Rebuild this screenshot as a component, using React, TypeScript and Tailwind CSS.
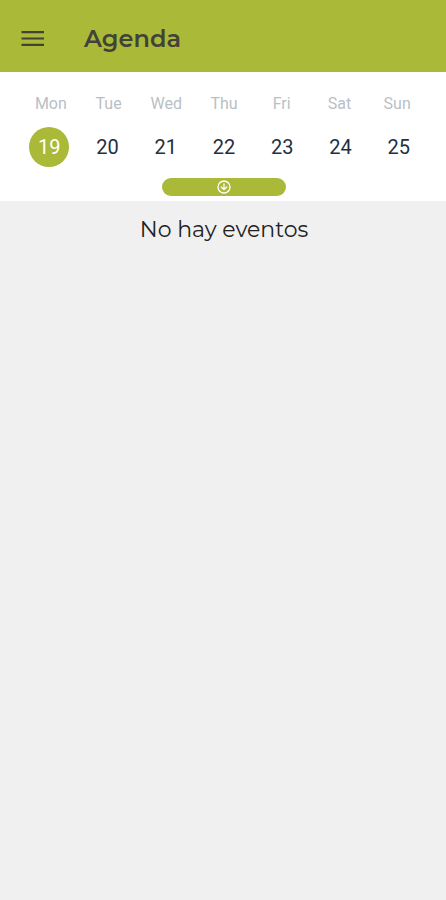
import { useState } from "react"

interface Day {
  name: string
  date: number
}

const week: Day[] = [
  { name: "Mon", date: 19 },
  { name: "Tue", date: 20 },
  { name: "Wed", date: 21 },
  { name: "Thu", date: 22 },
  { name: "Fri", date: 23 },
  { name: "Sat", date: 24 },
  { name: "Sun", date: 25 },
]

function MenuIcon() {
  return (
    <svg viewBox="0 0 24 24" className="size-6" fill="currentColor" aria-hidden="true">
      <path d="M1.5 4H24v2.2H1.5zM1.5 10.4H24v2.2H1.5zM1.5 16.8H24V19H1.5z" />
    </svg>
  )
}

function ArrowDownCircleIcon() {
  return (
    <svg
      viewBox="0 0 14 14"
      className="size-3.5"
      fill="none"
      stroke="currentColor"
      strokeWidth="1.3"
      strokeLinecap="round"
      strokeLinejoin="round"
      aria-hidden="true"
    >
      <circle cx="7" cy="7" r="6" />
      <path d="M7 3.8v5.4M4.2 7L7 9.6 9.8 7" />
    </svg>
  )
}

export default function App() {
  const [selected, setSelected] = useState(19)

  return (
    <div className="min-h-screen bg-[#f0f0f0] font-['Montserrat','Open_Sans',sans-serif]">
      <header className="flex h-[72px] items-center gap-10 bg-[#abb938] px-5 pt-1.5 text-[#424338]">
        <button type="button" aria-label="Menu">
          <MenuIcon />
        </button>
        <h1 className="text-2xl font-semibold">Agenda</h1>
      </header>
      <section className="bg-white pt-5 pb-[5px] pl-0.5 font-[Roboto,sans-serif]">
        <div className="grid grid-cols-7 px-5 text-center text-base text-[#b9bfc5]">
          {week.map((day) => (
            <span key={day.name}>{day.name}</span>
          ))}
        </div>
        <div className="mt-[11px] grid grid-cols-7 justify-items-center px-[18px]">
          {week.map((day) => (
            <button
              key={day.date}
              type="button"
              aria-label={`${day.name} ${day.date}`}
              aria-pressed={day.date === selected}
              onClick={() => setSelected(day.date)}
              className={
                day.date === selected
                  ? "size-10 rounded-full bg-[#abb938] text-xl text-white"
                  : "size-10 rounded-full text-xl text-[#1f3041]"
              }
            >
              {day.date}
            </button>
          ))}
        </div>
        <button
          type="button"
          aria-label="Show month"
          className="mx-auto mt-[11px] flex h-[18px] w-[124px] items-center justify-center rounded-full bg-[#abb938] text-white"
        >
          <ArrowDownCircleIcon />
        </button>
      </section>
      <main className="pt-3 pl-0.5">
        <p className="text-center text-[22px] text-[#222222]">No hay eventos</p>
      </main>
    </div>
  )
}
